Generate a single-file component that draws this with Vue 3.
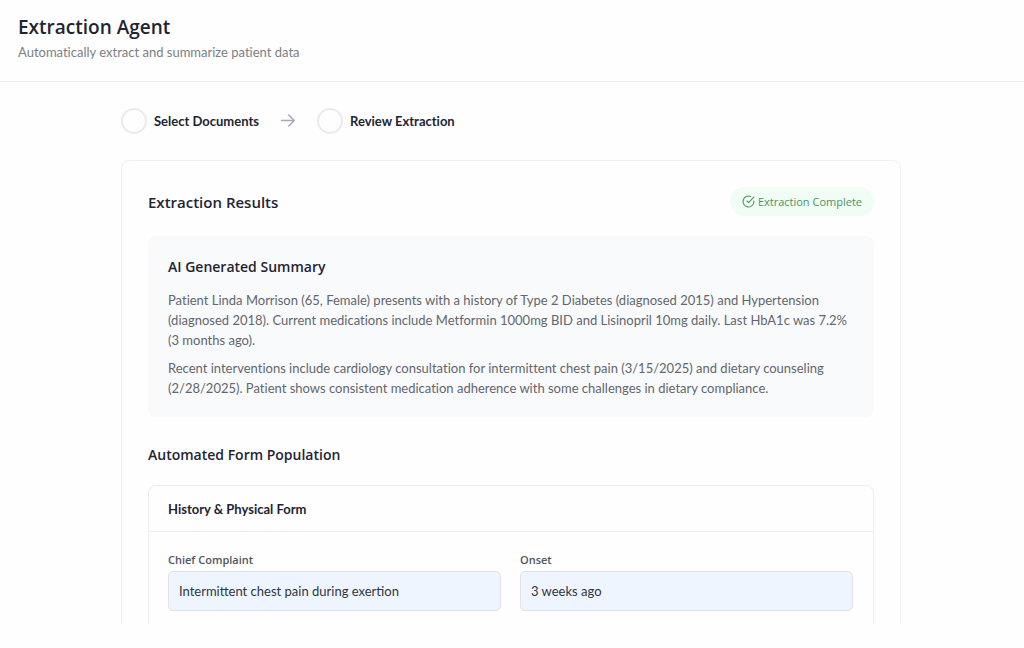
<template>
  <div class="page">
    <header class="page-header">
      <h1 class="page-title">Extraction Agent</h1>
      <p class="page-subtitle">Automatically extract and summarize patient data</p>
    </header>

    <main class="content">
      <div class="content-inner">
        <ol class="steps">
          <li v-for="(step, index) in steps" :key="step" class="step">
            <svg v-if="index > 0" class="step-arrow" viewBox="0 0 16 16" aria-hidden="true">
              <path d="M1.5 7.5h12.5M8.8 2L14.2 7.5l-5.4 5.5" />
            </svg>
            <span class="step-circle"></span>
            <span class="step-label">{{ step }}</span>
          </li>
        </ol>

        <section class="card">
          <div class="card-header">
            <h2 class="card-title">Extraction Results</h2>
            <div class="status-badge">
              <svg class="status-icon" viewBox="0 0 24 24" aria-hidden="true">
                <path d="M22 11.08V12a10 10 0 1 1-5.93-9.14" />
                <path d="M22 4L12 14.01l-3-3" />
              </svg>
              <span>Extraction Complete</span>
            </div>
          </div>

          <div class="summary">
            <h3 class="summary-title">AI Generated Summary</h3>
            <p v-for="text in summary" :key="text" class="summary-text">{{ text }}</p>
          </div>

          <h3 class="section-title">Automated Form Population</h3>

          <form class="form" @submit.prevent>
            <h4 class="form-title">History &amp; Physical Form</h4>
            <div class="form-body">
              <div v-for="field in fields" :key="field.id" class="field">
                <label class="field-label" :for="field.id">{{ field.label }}</label>
                <input :id="field.id" v-model="field.value" class="field-input" type="text" />
              </div>
            </div>
          </form>
        </section>
      </div>
    </main>
  </div>
</template>

<script setup>
import { ref } from 'vue';

const steps = ['Select Documents', 'Review Extraction'];

const summary = [
  'Patient Linda Morrison (65, Female) presents with a history of Type 2 Diabetes (diagnosed 2015) and Hypertension (diagnosed 2018). Current medications include Metformin 1000mg BID and Lisinopril 10mg daily. Last HbA1c was 7.2% (3 months ago).',
  'Recent interventions include cardiology consultation for intermittent chest pain (3/15/2025) and dietary counseling (2/28/2025). Patient shows consistent medication adherence with some challenges in dietary compliance.',
];

const fields = ref([
  { id: 'chief-complaint', label: 'Chief Complaint', value: 'Intermittent chest pain during exertion' },
  { id: 'onset', label: 'Onset', value: '3 weeks ago' },
]);
</script>

<style>
body {
  margin: 0;
  background: #fefefe;
}
</style>

<style scoped>
.page {
  display: flex;
  flex-direction: column;
  height: 100vh;
  padding-bottom: 24px;
  box-sizing: border-box;
  font-family: Lato, 'Noto Sans', sans-serif;
  font-variant-ligatures: none;
  color: #1f2433;
}

h1,
h2,
h3,
h4,
p {
  margin: 0;
}

.page-title,
.card-title,
.summary-title,
.section-title,
.status-badge,
.field-label {
  font-family: 'Open Sans', 'Noto Sans', sans-serif;
}

.page-header {
  flex-shrink: 0;
  padding: 14px 18px 19px;
  border-bottom: 1px solid #eff0f2;
}

.page-title {
  font-size: 19px;
  line-height: 26px;
  font-weight: 600;
}

.page-subtitle {
  margin-top: 2px;
  font-size: 13px;
  line-height: 20px;
  color: #7c7f85;
}

/* 본문 스크롤 영역 */
.content {
  flex: 1;
  min-height: 0;
  overflow: hidden;
  padding: 26px 23px 0 21px;
}

.content-inner {
  max-width: 780px;
  margin: 0 auto;
}

.steps {
  display: flex;
  margin: 0 0 26px;
  padding: 0;
  list-style: none;
}

.step {
  display: flex;
  align-items: center;
}

.step-circle {
  width: 26px;
  height: 26px;
  margin-right: 7px;
  border: 2px solid #eaebee;
  border-radius: 50%;
  box-sizing: border-box;
}

.step-label {
  font-size: 13px;
  line-height: 20px;
  font-weight: 700;
}

.step-arrow {
  width: 16px;
  height: 16px;
  margin: 0 21px;
  fill: none;
  stroke: #a4a9b3;
  stroke-width: 1.5;
  stroke-linecap: round;
  stroke-linejoin: round;
}

.card {
  padding: 26px;
  border: 1px solid #eff0f2;
  border-radius: 8px;
}

.card-header {
  display: flex;
  justify-content: space-between;
  align-items: center;
  margin-bottom: 20px;
}

.card-title {
  font-size: 15px;
  line-height: 24px;
  font-weight: 600;
}

.status-badge {
  display: flex;
  align-items: center;
  gap: 3px;
  padding: 5px 12px;
  border-radius: 15px;
  background: #f1fcf5;
  font-size: 11px;
  line-height: 19px;
  color: #4a9462;
}

.status-icon {
  width: 13px;
  height: 13px;
  fill: none;
  stroke: currentColor;
  stroke-width: 2;
  stroke-linecap: round;
  stroke-linejoin: round;
}

.summary {
  padding: 20px 20px 19px;
  border-radius: 8px;
  background: #f9fafc;
}

.summary-title {
  margin-bottom: 12px;
  font-size: 14px;
  line-height: 22px;
  font-weight: 600;
}

.summary-text {
  font-size: 13px;
  line-height: 20px;
  color: #62666e;
}

.summary-text + .summary-text {
  margin-top: 8px;
}

.section-title {
  margin: 27px 0 19px;
  font-size: 14px;
  line-height: 22px;
  font-weight: 600;
}

.form {
  border: 1px solid #eceef1;
  border-radius: 8px;
}

.form-title {
  padding: 13px 19px 12px;
  border-bottom: 1px solid #eceef1;
  font-size: 13px;
  line-height: 20px;
  font-weight: 700;
}

.form-body {
  display: grid;
  grid-template-columns: 1fr 1fr;
  gap: 19px;
  padding: 19px 20px 40px 19px;
}

.field {
  display: flex;
  flex-direction: column;
}

.field-label {
  margin-bottom: 2px;
  font-size: 11px;
  line-height: 18px;
  font-weight: 600;
  color: #50555f;
}

.field-input {
  width: 100%;
  height: 40px;
  padding: 0 10px;
  border: 1px solid #dce2eb;
  border-radius: 5px;
  box-sizing: border-box;
  background: #eef5fe;
  font-family: inherit;
  font-size: 13px;
  color: #30353f;
}

.field-input:focus {
  outline: 2px solid #a9c8f5;
}
</style>
